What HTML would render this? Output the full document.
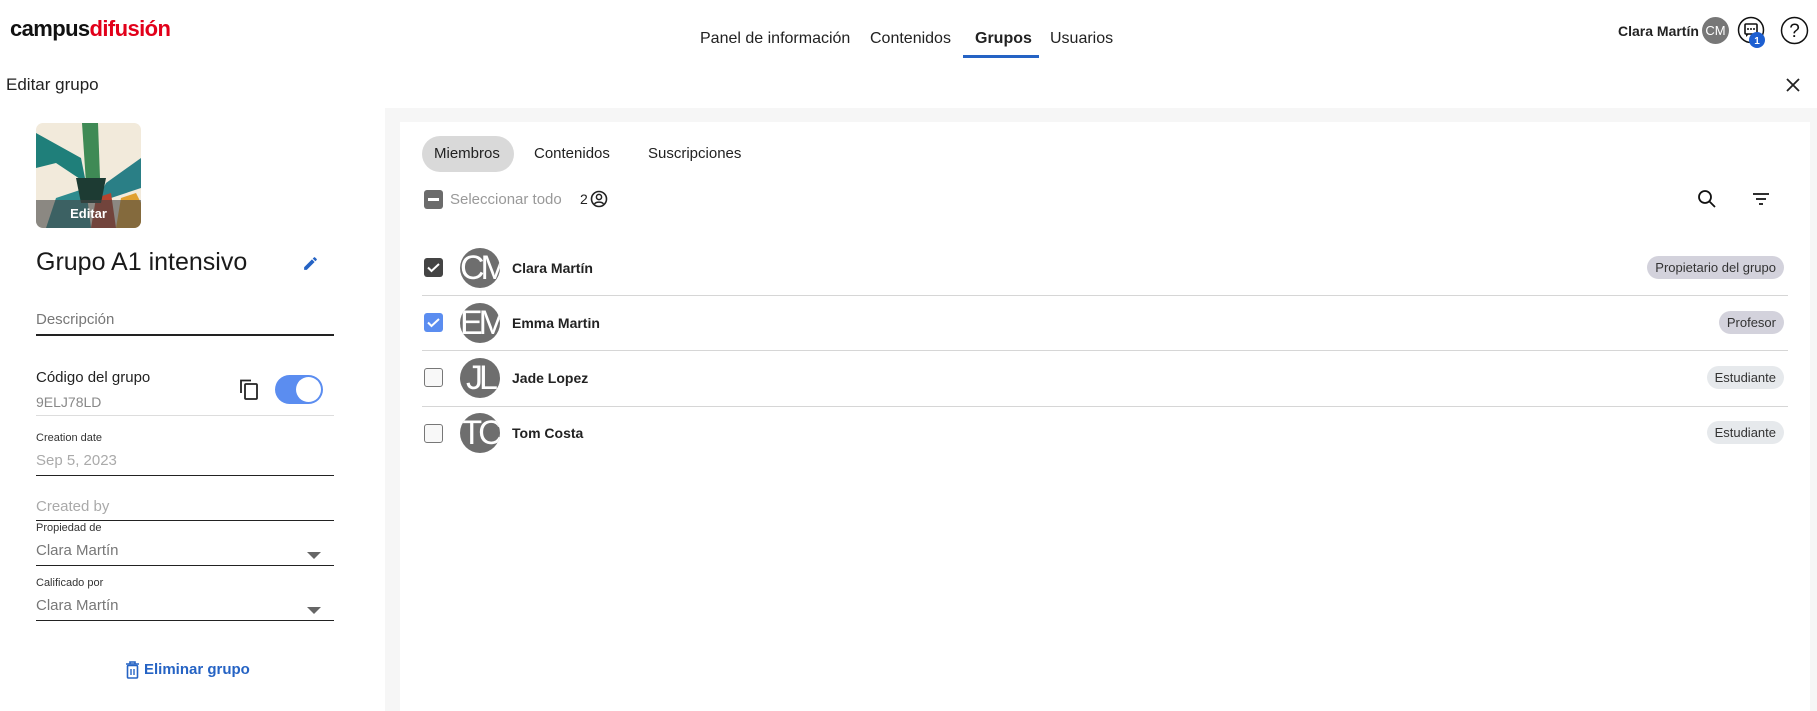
<!DOCTYPE html>
<html><head><meta charset="utf-8"><style>
*{margin:0;padding:0;box-sizing:border-box}
body{width:1817px;height:711px;position:relative;overflow:hidden;background:#fff;font-family:"Liberation Sans",sans-serif;color:#1a1a1a}
.a{position:absolute;white-space:nowrap}
.line{position:absolute;left:36px;width:298px;height:1px;background:#222}
.chk{position:absolute;left:424px;width:19px;height:19px;border-radius:3px}
.av{position:absolute;left:460px;width:40px;height:40px;border-radius:50%;background:#6e6e6e;color:#fff;font-size:34px;line-height:40px;text-align:center;overflow:hidden;letter-spacing:-4px}
.nm{position:absolute;left:512px;font-size:14px;font-weight:bold;color:#222}
.chip{position:absolute;right:33px;height:23px;border-radius:12px;font-size:13px;line-height:23px;padding:0 8px;color:#333}
.div{position:absolute;left:422px;width:1366px;height:1px;background:#d6d6d6}
</style></head><body>
<div class="a" style="left:10px;top:16px;font-size:22px;font-weight:bold;letter-spacing:-0.6px"><span style="color:#111">campus</span><span style="color:#e2001a">difusión</span></div>
<div class="a" style="left:700px;top:30px;font-size:16px;color:#222">Panel de información</div>
<div class="a" style="left:870px;top:30px;font-size:16px;color:#222">Contenidos</div>
<div class="a" style="left:975px;top:30px;font-size:16px;font-weight:bold;color:#222">Grupos</div>
<div class="a" style="left:963px;top:55px;width:76px;height:3px;background:#2563c4"></div>
<div class="a" style="left:1050px;top:30px;font-size:16px;color:#222">Usuarios</div>
<div class="a" style="left:1618px;top:23px;font-size:14px;font-weight:bold;color:#222">Clara Martín</div>
<div class="a" style="left:1702px;top:17px;width:27px;height:27px;border-radius:50%;background:#777;color:#fff;font-size:13px;line-height:27px;text-align:center">CM</div>
<svg class="a" style="left:1737px;top:16px" width="30" height="34" viewBox="0 0 30 34"><circle cx="14" cy="14" r="12.5" fill="none" stroke="#111" stroke-width="1.5"/><rect x="8" y="8" width="12" height="10" rx="1" fill="none" stroke="#111" stroke-width="1.6"/><path d="M9 18 L9 21 L12 18" fill="#111"/><circle cx="11" cy="13" r="1" fill="#111"/><circle cx="14" cy="13" r="1" fill="#111"/><circle cx="17" cy="13" r="1" fill="#111"/><circle cx="20" cy="24" r="8" fill="#1d5fd1"/><text x="20" y="28" font-size="10" font-weight="bold" fill="#fff" text-anchor="middle" font-family="Liberation Sans">1</text></svg>
<svg class="a" style="left:1780px;top:16px" width="29" height="29"><circle cx="14.5" cy="14.5" r="13" fill="none" stroke="#111" stroke-width="1.5"/><text x="14.5" y="21" font-size="19" text-anchor="middle" fill="#111" font-family="Liberation Sans">?</text></svg>
<div class="a" style="left:6px;top:75px;font-size:17px;color:#222">Editar grupo</div>
<svg class="a" style="left:1786px;top:78px" width="14" height="14"><path d="M1 1L13 13M13 1L1 13" stroke="#222" stroke-width="1.8"/></svg>

<div class="a" style="left:385px;top:108px;width:1432px;height:603px;background:#f6f6f6"></div>
<div class="a" style="left:400px;top:122px;width:1410px;height:589px;background:#fff"></div>

<div class="a" style="left:36px;top:123px;width:105px;height:105px;border-radius:7px;overflow:hidden;background:#f2eadb">
<svg width="105" height="105"><path d="M0 10 L45 35 L50 60 L20 40 L0 45Z" fill="#1f7f7a"/><path d="M46 0 L62 0 L64 55 L50 60Z" fill="#3f8a55"/><path d="M105 35 L70 60 L60 80 L105 65Z" fill="#2a7f86"/><path d="M10 105 L20 75 L50 65 L55 105Z" fill="#2e8b8e"/><path d="M55 105 L60 75 L75 70 L80 105Z" fill="#b5432e"/><path d="M80 105 L85 75 L100 70 L105 80 L105 105Z" fill="#e0a030"/><path d="M40 55 L70 55 L65 80 L45 80Z" fill="#1d3b33"/></svg>
<div style="position:absolute;left:0;top:77px;width:105px;height:28px;background:rgba(70,70,70,.6);color:#fff;font-size:13px;font-weight:bold;text-align:center;line-height:28px">Editar</div></div>
<div class="a" style="left:36px;top:248px;font-size:25px;color:#1a1a1a">Grupo A1 intensivo</div>
<svg class="a" style="left:302px;top:255px" width="17" height="17" viewBox="0 0 24 24"><path d="M3 17.25V21h3.75L17.81 9.94l-3.75-3.75L3 17.25zM20.71 7.04a1 1 0 000-1.41l-2.34-2.34a1 1 0 00-1.41 0l-1.830 1.83 3.75 3.75 1.83-1.83z" fill="#2563c4"/></svg>
<div class="a" style="left:36px;top:311px;font-size:15px;color:#777">Descripción</div>
<div class="line" style="top:334px;height:2px"></div>
<div class="a" style="left:36px;top:369px;font-size:15px;color:#222">Código del grupo</div>
<div class="a" style="left:36px;top:394px;font-size:14px;color:#888">9ELJ78LD</div>
<svg class="a" style="left:240px;top:379px" width="18" height="21" viewBox="0 0 18 21"><path d="M1 14V1.5H11" fill="none" stroke="#222" stroke-width="1.8"/><rect x="5" y="5" width="12" height="15" rx="1" fill="none" stroke="#222" stroke-width="1.8"/></svg>
<div class="a" style="left:275px;top:375px;width:48px;height:29px;border-radius:15px;background:#5b8df0"></div>
<div class="a" style="left:296px;top:377px;width:25px;height:25px;border-radius:50%;background:#fff"></div>
<div class="line" style="top:415px;background:#ddd"></div>
<div class="a" style="left:36px;top:432px;font-size:11px;color:#333">Creation date</div>
<div class="a" style="left:36px;top:452px;font-size:15px;color:#aaa">Sep 5, 2023</div>
<div class="line" style="top:475px"></div>
<div class="a" style="left:36px;top:498px;font-size:15px;color:#aaa">Created by</div>
<div class="line" style="top:520px"></div>
<div class="a" style="left:36px;top:522px;font-size:11px;color:#333">Propiedad de</div>
<div class="a" style="left:36px;top:542px;font-size:15px;color:#777">Clara Martín</div>
<div class="a" style="left:307px;top:552px;width:0;height:0;border-left:7px solid transparent;border-right:7px solid transparent;border-top:7px solid #666"></div>
<div class="line" style="top:565px"></div>
<div class="a" style="left:36px;top:577px;font-size:11px;color:#333">Calificado por</div>
<div class="a" style="left:36px;top:597px;font-size:15px;color:#777">Clara Martín</div>
<div class="a" style="left:307px;top:607px;width:0;height:0;border-left:7px solid transparent;border-right:7px solid transparent;border-top:7px solid #666"></div>
<div class="line" style="top:620px"></div>
<svg class="a" style="left:125px;top:661px" width="15" height="18" viewBox="0 0 15 18"><path d="M1 3h13M5 3V1h5v2" stroke="#2563c4" stroke-width="1.6" fill="none"/><rect x="2.5" y="4.5" width="10" height="12.5" rx="1" fill="none" stroke="#2563c4" stroke-width="1.6"/><path d="M6 8v6M9 8v6" stroke="#2563c4" stroke-width="1.4"/></svg>
<div class="a" style="left:144px;top:661px;font-size:15px;font-weight:bold;color:#2563c4">Eliminar grupo</div>

<div class="a" style="left:422px;top:136px;width:92px;height:36px;border-radius:18px;background:#d9d9d9"></div>
<div class="a" style="left:434px;top:145px;font-size:15px;color:#222">Miembros</div>
<div class="a" style="left:534px;top:145px;font-size:15px;color:#222">Contenidos</div>
<div class="a" style="left:648px;top:145px;font-size:15px;color:#222">Suscripciones</div>
<div class="chk" style="top:190px;background:#6b6b6b"><div style="position:absolute;left:4px;top:8px;width:11px;height:2.5px;background:#fff"></div></div>
<div class="a" style="left:450px;top:191px;font-size:15px;color:#999">Seleccionar todo</div>
<div class="a" style="left:580px;top:191px;font-size:14px;color:#222">2</div>
<svg class="a" style="left:590px;top:190px" width="18" height="18"><circle cx="9" cy="9" r="7.5" fill="none" stroke="#222" stroke-width="1.6"/><circle cx="9" cy="7" r="2.6" fill="none" stroke="#222" stroke-width="1.5"/><path d="M4.5 14c1.5-2.5 7.5-2.5 9 0" fill="none" stroke="#222" stroke-width="1.5"/></svg>
<svg class="a" style="left:1697px;top:189px" width="20" height="20"><circle cx="8" cy="8" r="6" fill="none" stroke="#111" stroke-width="1.8"/><path d="M12.5 12.5L18 18" stroke="#111" stroke-width="1.8"/></svg>
<svg class="a" style="left:1752px;top:192px" width="18" height="14"><path d="M1 2h16M4 7h10M7 12h4" stroke="#111" stroke-width="1.8"/></svg>

<div class="chk" style="top:258px;background:#444"><svg width="19" height="19"><path d="M4 9.5l3.5 3.5L15 6" stroke="#fff" stroke-width="2" fill="none"/></svg></div>
<div class="av" style="top:248px">CM</div>
<div class="nm" style="top:260px">Clara Martín</div>
<div class="chip" style="top:256px;background:#d3d2dc">Propietario del grupo</div>
<div class="div" style="top:295px"></div>
<div class="chk" style="top:313px;background:#5b8df0"><svg width="19" height="19"><path d="M4 9.5l3.5 3.5L15 6" stroke="#fff" stroke-width="2" fill="none"/></svg></div>
<div class="av" style="top:303px">EM</div>
<div class="nm" style="top:315px">Emma Martin</div>
<div class="chip" style="top:311px;background:#d3d2dc">Profesor</div>
<div class="div" style="top:350px"></div>
<div class="chk" style="top:368px;border:1.5px solid #777;background:#f8f8f8"></div>
<div class="av" style="top:358px">JL</div>
<div class="nm" style="top:370px">Jade Lopez</div>
<div class="chip" style="top:366px;background:#e6e9ec">Estudiante</div>
<div class="div" style="top:406px"></div>
<div class="chk" style="top:424px;border:1.5px solid #777;background:#f8f8f8"></div>
<div class="av" style="top:413px">TC</div>
<div class="nm" style="top:425px">Tom Costa</div>
<div class="chip" style="top:421px;background:#e6e9ec">Estudiante</div>
</body></html>
